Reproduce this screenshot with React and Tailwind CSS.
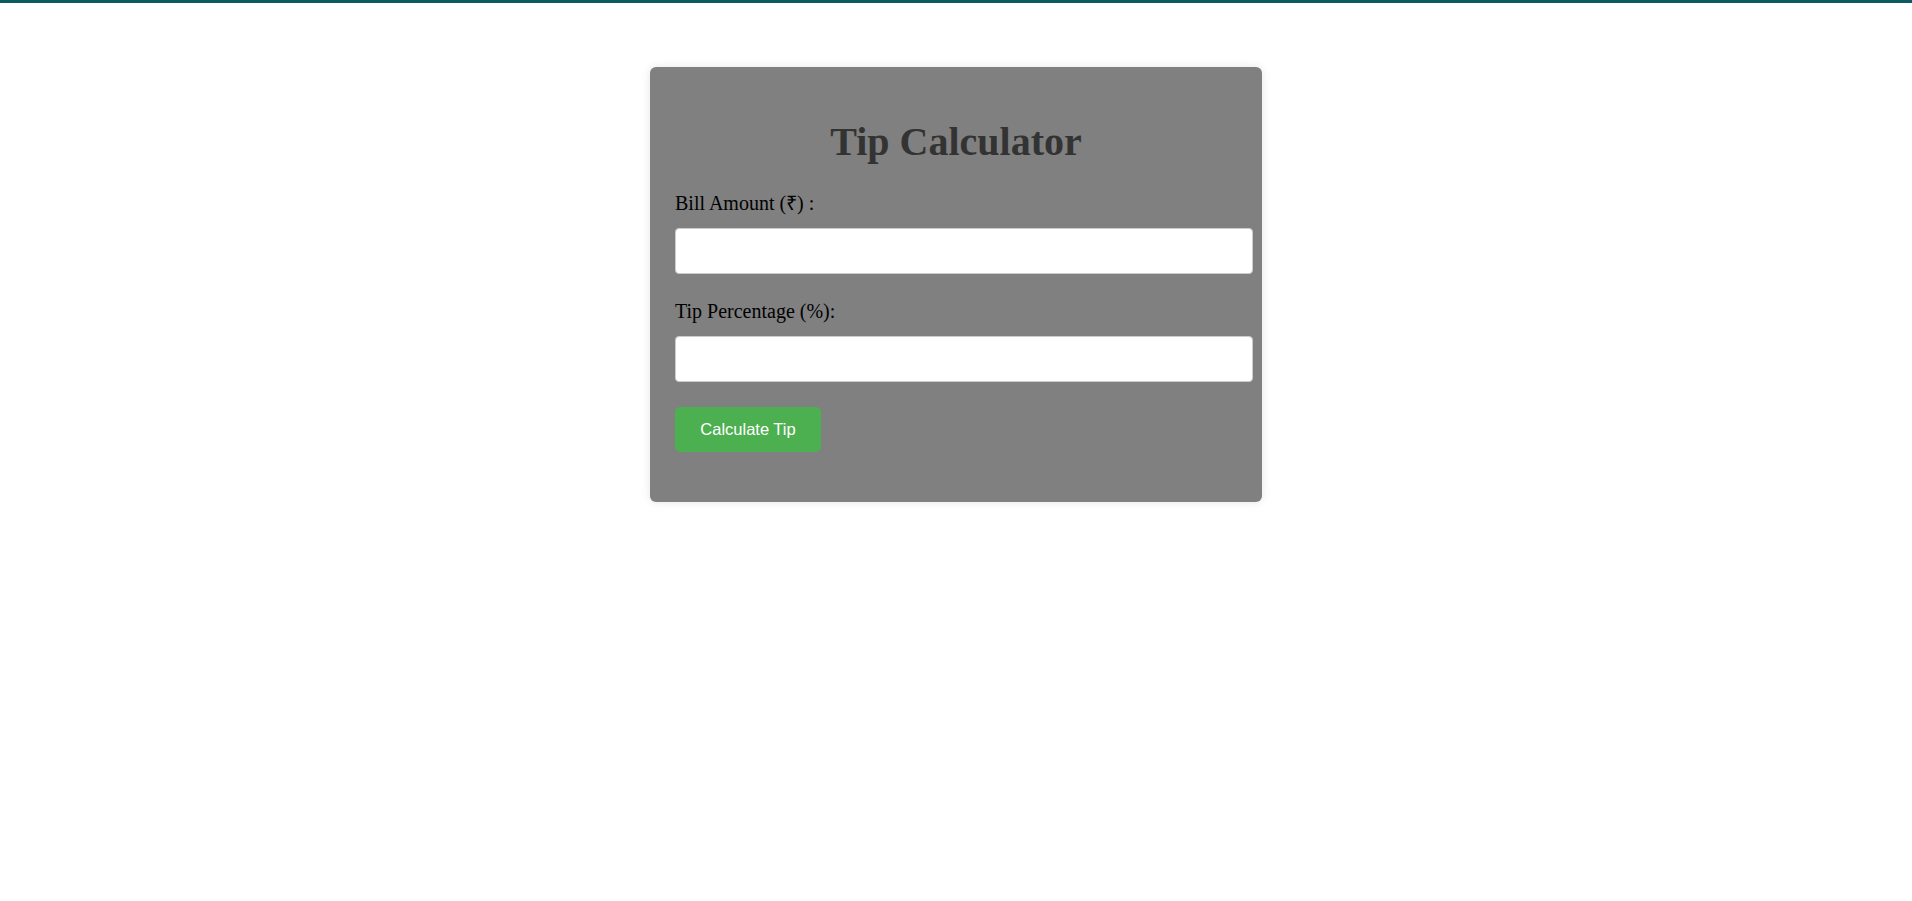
import React, { useState } from "react";

export default function App() {
  const [bill, setBill] = useState("");
  const [tipPct, setTipPct] = useState("");
  const [tip, setTip] = useState(null);

  const calculateTip = () => {
    const b = parseFloat(bill);
    const p = parseFloat(tipPct);
    if (isNaN(b) || isNaN(p)) {
      setTip(null);
      return;
    }
    setTip(((b * p) / 100).toFixed(2));
  };

  return (
    <div className="min-h-screen bg-white border-t-[3px] border-[#0e5a61]">
      <div className="mx-auto mt-[64px] w-[612px] rounded-md bg-[#808080] px-[25px] pt-[52px] pb-[50px] shadow-[0_0_10px_rgba(0,0,0,0.1)] font-['Liberation_Serif',serif]">
        {/* Title */}
        <h1 className="text-center text-[40px] leading-[46px] font-bold text-[#333]">
          Tip Calculator
        </h1>

        {/* Bill amount */}
        <label className="mt-[27px] block text-[20px] leading-[23px] text-black">
          Bill Amount (₹) :
        </label>
        <input
          type="number"
          value={bill}
          onChange={(e) => setBill(e.target.value)}
          className="mt-[13px] block h-[46px] w-[578px] rounded-[4px] border border-[#ccc] bg-white px-2 text-[16px] outline-none"
        />

        {/* Tip percentage */}
        <label className="mt-[26px] block text-[20px] leading-[23px] text-black">
          Tip Percentage (%):
        </label>
        <input
          type="number"
          value={tipPct}
          onChange={(e) => setTipPct(e.target.value)}
          className="mt-[13px] block h-[46px] w-[578px] rounded-[4px] border border-[#ccc] bg-white px-2 text-[16px] outline-none"
        />

        <button
          onClick={calculateTip}
          className="mt-[25px] flex h-[45px] w-[146px] items-center justify-center rounded-[5px] bg-[#4caf50] text-[16.5px] text-white font-['Liberation_Sans',Arial,sans-serif]"
        >
          Calculate Tip
        </button>

        {tip !== null && (
          <p className="mt-4 text-[20px] text-black">Tip Amount: ₹{tip}</p>
        )}
      </div>
    </div>
  );
}
